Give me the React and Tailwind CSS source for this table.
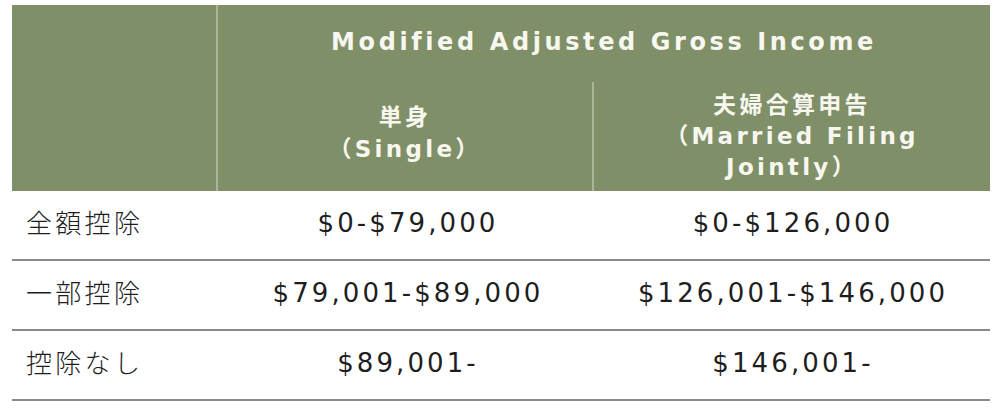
import React from 'react';

const font = { fontFamily: '"DejaVu Sans", Verdana, "Noto Sans CJK JP", sans-serif' };

const rows = [
  { label: '全額控除', single: '$0-$79,000', joint: '$0-$126,000' },
  { label: '一部控除', single: '$79,001-$89,000', joint: '$126,001-$146,000' },
  { label: '控除なし', single: '$89,001-', joint: '$146,001-' },
];

const App = () => {
  return (
    <div className="w-[1000px] h-[411px] bg-white pt-[5px] pl-[12px]" style={font}>
      <div className="w-[978px]">
        <div className="flex h-[186px] bg-[#7f8f67] text-[#f7f7f0] font-bold">
          <div className="w-[206px] border-r-2 border-[#a9b695]"></div>
          <div className="flex-1 flex flex-col">
            <div className="h-[77px] flex items-center justify-center text-[24px] tracking-[3.6px] pb-[4px]">
              Modified Adjusted Gross Income
            </div>
            <div className="flex-1 flex">
              <div className="w-[376px] border-r-2 border-[#a9b695] flex flex-col items-center justify-center text-[23px] leading-[32px] tracking-[3.3px] pb-[8px]">
                <span>単身</span>
                <span>（Single）</span>
              </div>
              <div className="flex-1 flex flex-col items-center justify-center text-[23px] leading-[31px] tracking-[3.3px]">
                <span>夫婦合算申告</span>
                <span>（Married Filing</span>
                <span>Jointly）</span>
              </div>
            </div>
          </div>
        </div>
        {rows.map((r, i) => (
          <div key={i} className="flex h-[70px] border-b-2 border-[#8a8a8a] text-[#1e1e1e] items-center">
            <div className="w-[208px] pl-[14px] text-[26px] tracking-[3.3px] pb-[7px]" style={{ fontFamily: '"Noto Sans CJK JP", sans-serif', fontWeight: 300 }}>
              {r.label}
            </div>
            <div className="w-[376px] text-center text-[26px] tracking-[3.1px] pb-[4px]">{r.single}</div>
            <div className="flex-1 text-center text-[26px] tracking-[3.1px] pb-[4px]">{r.joint}</div>
          </div>
        ))}
      </div>
    </div>
  );
};

export default App;
